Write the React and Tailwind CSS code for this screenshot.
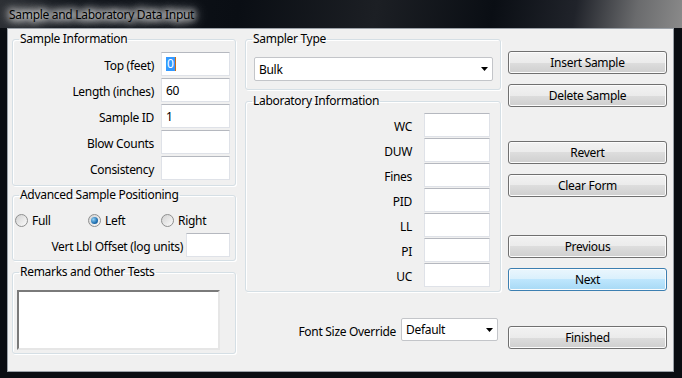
import React from 'react'

const box = 'h-[24px] bg-white border border-[#dfe2e8] border-t-[#b5b8bf] px-[4px] flex items-center'

function Group({ title, className = '', children }) {
  return (
    <fieldset className={`border border-[#d5dfe5] rounded-[3px] shadow-[inset_1px_1px_0_#fff,1px_1px_0_#fff] ${className}`}>
      <legend className="ml-[6px] px-[1px] leading-[16px]">{title}</legend>
      {children}
    </fieldset>
  )
}

function Field({ label, value, focused }) {
  return (
    <div className="flex items-center justify-end gap-[7px]">
      <span className="pt-[3px]">{label}</span>
      <div className={`${box} w-[69px] ${focused ? 'border-[#7fb2e3] border-t-[#5f9ad6]' : ''}`}>
        {focused ? (
          <span className="flex items-center">
            <span className="bg-[#3399ff] text-white leading-[14px] px-[1px]">{value}</span>
            <span className="w-[1px] h-[14px] bg-[#cc6a10]" />
          </span>
        ) : (
          <span className="pt-[2px]">{value}</span>
        )}
      </div>
    </div>
  )
}

function Radio({ label, checked, className = '' }) {
  return (
    <div className={`flex items-center gap-[4px] ${className}`}>
      <div className="w-[13px] h-[13px] rounded-full border border-[#8e8f8f] bg-[linear-gradient(135deg,#d2d2d2,#fbfbfb)] flex items-center justify-center">
        {checked && <div className="w-[7px] h-[7px] rounded-full bg-[radial-gradient(circle_at_35%_35%,#8fd0f5,#1f6fb0_60%,#0f4d85)]" />}
      </div>
      <span className="pt-[2px]">{label}</span>
    </div>
  )
}

function Combo({ value, className = '' }) {
  return (
    <div className={`bg-white border border-[#c3c5c9] rounded-[2px] flex items-center justify-between pl-[4px] pr-[4px] ${className}`}>
      <span className="pt-[1px]">{value}</span>
      <svg width="7" height="4" viewBox="0 0 7 4"><path d="M0 0h7L3.5 4z" fill="#000" /></svg>
    </div>
  )
}

function Button({ children, primary, className = '' }) {
  const skin = primary
    ? 'border-[#3c7fb1] bg-[linear-gradient(#eaf6fd_0%,#d9f0fc_50%,#bee6fd_50%,#a7d9f5_100%)]'
    : 'border-[#707070] bg-[linear-gradient(#f2f2f2_0%,#ebebeb_50%,#dddddd_50%,#cfcfcf_100%)]'
  return (
    <div className={`h-[23px] w-[159px] border rounded-[3px] shadow-[inset_0_0_0_1px_#fcfcfc] flex items-center justify-center ${skin} ${className}`}>
      <span className="pt-[1px]">{children}</span>
    </div>
  )
}

export default function App() {
  const lab = ['WC', 'DUW', 'Fines', 'PID', 'LL', 'PI', 'UC']
  return (
    <div className="w-[682px] h-[378px] flex flex-col bg-[#0a0d12] pl-[7px] pr-[8px] pb-[6px] text-[12px] leading-[16px] tracking-[-0.3px] text-black font-['Noto_Sans',sans-serif]">
      {/* title bar */}
      <div className="h-[28px] -ml-[7px] -mr-[8px] pl-[9px] flex items-center bg-[linear-gradient(100deg,#2c2f34_0%,#10141a_10%,#0a0e14_35%,#1c1f24_55%,#0a0e14_72%,#20232a_84%,#6a6b6d_93%,#8a8a8a_100%)]">
        <span className="pt-[1px] [text-shadow:0_0_6px_#fff,0_0_8px_#fff,0_0_12px_#eee,0_0_16px_#ccc,0_0_20px_#bbb]">Sample and Laboratory Data Input</span>
      </div>

      {/* client */}
      <div className="flex-1 border border-[#9ba1a8] bg-[#f0f0f0] flex pl-[4px]">
        {/* left column */}
        <div className="w-[224px] pt-[2px] flex flex-col">
          <Group title="Sample Information">
            <div className="pt-[5px] pb-[5px] pr-[5px] flex flex-col gap-[2px]">
              <Field label="Top (feet)" value="0" focused />
              <Field label="Length (inches)" value="60" />
              <Field label="Sample ID" value="1" />
              <Field label="Blow Counts" value="" />
              <Field label="Consistency" value="" />
            </div>
          </Group>

          <Group title="Advanced Sample Positioning" className="mt-[1px]">
            <div className="pt-[9px] pb-[3px] pr-[5px]">
              <div className="h-[16px] flex pl-[2px]">
                <Radio label="Full" className="w-[73px]" />
                <Radio label="Left" checked className="w-[73px]" />
                <Radio label="Right" />
              </div>
              <div className="mt-[5px] flex items-center justify-end gap-[3px]">
                <span className="pt-[3px]">Vert Lbl Offset (log units)</span>
                <div className={`${box} w-[44px]`} />
              </div>
            </div>
          </Group>

          <Group title="Remarks and Other Tests" className="mt-[3px]">
            <div className="pt-[10px] pb-[3px] pl-[4px]">
              <div className="w-[203px] h-[60px] bg-white border-2 border-t-[#7a7a7a] border-l-[#7a7a7a] border-b-[#e6e6e6] border-r-[#e6e6e6]" />
            </div>
          </Group>
        </div>

        {/* middle column */}
        <div className="w-[256px] ml-[9px] pt-[2px] flex flex-col">
          <Group title="Sampler Type">
            <div className="pt-[10px] pb-[8px] pl-[8px]">
              <Combo value="Bulk" className="w-[239px] h-[24px]" />
            </div>
          </Group>

          <Group title="Laboratory Information" className="mt-[3px]">
            <div className="pt-[4px] pb-[4px] pr-[10px] flex flex-col gap-[1px]">
              {lab.map((l) => (
                <div key={l} className="flex items-center justify-end gap-[12px]">
                  <span className="pt-[3px]">{l}</span>
                  <div className={`${box} w-[66px]`} />
                </div>
              ))}
            </div>
          </Group>

          <div className="mt-[26px] flex items-center justify-end gap-[5px] pr-[3px]">
            <span className="pt-[4px]">Font Size Override</span>
            <Combo value="Default" className="w-[97px] h-[23px]" />
          </div>
        </div>

        {/* buttons */}
        <div className="ml-[7px] pt-[22px] flex flex-col">
          <Button>Insert Sample</Button>
          <Button className="mt-[10px]">Delete Sample</Button>
          <Button className="mt-[34px]">Revert</Button>
          <Button className="mt-[10px]">Clear Form</Button>
          <Button className="mt-[38px]">Previous</Button>
          <Button primary className="mt-[10px]">Next</Button>
          <Button className="mt-[35px]">Finished</Button>
        </div>
      </div>
    </div>
  )
}
